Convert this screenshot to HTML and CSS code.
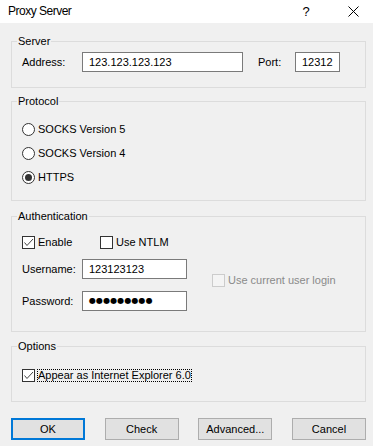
FILE: index.html
```html
<!DOCTYPE html>
<html lang="en">
<head>
    <meta charset="UTF-8">
    <title>Proxy Server</title>
    <link rel="stylesheet" href="styles.css">
</head>
<body>
    <div class="titlebar">
        <span class="title">Proxy Server</span>
        <span class="help">?</span>
        <svg class="close" width="11" height="11" viewBox="0 0 11 11">
            <path d="M0.5 0.5 L10.5 10.5 M10.5 0.5 L0.5 10.5" stroke="#000" stroke-width="1" fill="none"/>
        </svg>
    </div>

    <div class="dialog">
        <fieldset class="group group-server">
            <legend>Server</legend>
            <div class="row">
                <label class="lbl lbl-addr">Address:</label>
                <div class="field field-addr">123.123.123.123</div>
                <label class="lbl lbl-port">Port:</label>
                <div class="field field-port">12312</div>
            </div>
        </fieldset>

        <fieldset class="group group-protocol">
            <legend>Protocol</legend>
            <div class="option radio-row">
                <span class="radio"></span>
                <span>SOCKS Version 5</span>
            </div>
            <div class="option radio-row">
                <span class="radio"></span>
                <span>SOCKS Version 4</span>
            </div>
            <div class="option radio-row">
                <span class="radio checked"></span>
                <span>HTTPS</span>
            </div>
        </fieldset>

        <fieldset class="group group-auth">
            <legend>Authentication</legend>
            <div class="check-row">
                <div class="option opt-enable">
                    <span class="checkbox">
                        <svg width="11" height="11" viewBox="0 0 11 11"><polyline points="1.5,5.5 4,8.5 10,2" fill="none" stroke="#444" stroke-width="1"/></svg>
                    </span>
                    <span>Enable</span>
                </div>
                <div class="option">
                    <span class="checkbox"></span>
                    <span>Use NTLM</span>
                </div>
            </div>
            <div class="auth-body">
                <div class="auth-fields">
                    <div class="row row-user">
                        <label class="lbl lbl-addr">Username:</label>
                        <div class="field field-user">123123123</div>
                    </div>
                    <div class="row row-pass">
                        <label class="lbl lbl-addr">Password:</label>
                        <div class="field field-user field-pass">●●●●●●●●●</div>
                    </div>
                </div>
                <div class="option disabled">
                    <span class="checkbox"></span>
                    <span>Use current user login</span>
                </div>
            </div>
        </fieldset>

        <fieldset class="group group-options">
            <legend>Options</legend>
            <div class="option">
                <span class="checkbox">
                    <svg width="11" height="11" viewBox="0 0 11 11"><polyline points="1.5,5.5 4,8.5 10,2" fill="none" stroke="#444" stroke-width="1"/></svg>
                </span>
                <span class="focused">Appear as Internet Explorer 6.0</span>
            </div>
        </fieldset>

        <div class="buttons">
            <button class="btn btn-default">OK</button>
            <button class="btn">Check</button>
            <button class="btn">Advanced...</button>
            <button class="btn">Cancel</button>
        </div>
    </div>
</body>
</html>
```

FILE: styles.css
```css
body {
    margin: 0;
    background-color: #f0f0f0;
    font-family: "Liberation Sans", Arial, sans-serif;
    font-size: 11px;
    color: #000;
}
.titlebar {
    height: 23px;
    background: #fff;
    display: flex;
    align-items: center;
}
.title {
    flex: 1;
    padding-left: 8px;
    padding-bottom: 1px;
    font-size: 12px;
    letter-spacing: -0.5px;
}
.help {
    width: 10px;
    text-align: center;
    font-size: 13px;
}
.close {
    margin-left: 37px;
    margin-right: 14px;
}
.dialog {
    padding: 12px 7px 0 11px;
}
.group {
    margin: 0;
    min-width: 0;
    border: 1px solid #dcdcdc;
    padding: 0 10px;
}
.group legend {
    margin-left: -5px;
    padding: 0 1px;
    line-height: 13px;
}
.group-server {
    padding-top: 4px;
    padding-bottom: 15px;
}
.group-protocol {
    margin-top: 7px;
    padding-top: 9px;
    padding-bottom: 11px;
}
.group-auth {
    margin-top: 9px;
    padding-top: 13px;
    padding-bottom: 20px;
}
.group-options {
    margin-top: 8px;
    padding-top: 16px;
    padding-bottom: 19px;
}
.row {
    display: flex;
    align-items: center;
    height: 20px;
}
.lbl-addr {
    width: 60px;
}
.lbl-port {
    width: 37px;
    margin-left: 15px;
}
.field {
    box-sizing: border-box;
    height: 20px;
    line-height: 18px;
    border: 1px solid #7a7a7a;
    background: #fff;
    padding-left: 6px;
    white-space: nowrap;
}
.field-addr {
    width: 161px;
}
.field-port {
    width: 45px;
}
.field-user {
    width: 105px;
}
.field-pass {
    font-family: "DejaVu Sans", sans-serif;
    font-size: 8px;
    letter-spacing: 0.1px;
}
.option {
    display: flex;
    align-items: center;
    gap: 3px;
    line-height: 13px;
}
.radio-row {
    height: 24px;
}
.radio {
    box-sizing: border-box;
    width: 13px;
    height: 13px;
    border: 1px solid #333;
    border-radius: 50%;
    background: #fff;
    position: relative;
}
.radio.checked::after {
    content: "";
    position: absolute;
    left: 2px;
    top: 2px;
    width: 7px;
    height: 7px;
    border-radius: 50%;
    background: #333;
}
.checkbox {
    box-sizing: border-box;
    width: 13px;
    height: 13px;
    border: 1px solid #333;
    background: #fff;
    display: flex;
}
.check-row {
    display: flex;
    height: 13px;
    align-items: center;
}
.opt-enable {
    width: 78px;
}
.auth-body {
    display: flex;
    align-items: center;
}
.row-user {
    margin-top: 10px;
}
.row-pass {
    margin-top: 12px;
}
.auth-fields {
    width: 165px;
    margin-right: 25px;
}
.disabled {
    color: #8a8a8a;
}
.disabled .checkbox {
    border-color: #cccccc;
    background: #f4f4f4;
}
.focused {
    margin-left: -1px;
    padding: 0 1px;
    outline: 1px dotted #000;
    outline-offset: -1px;
}
.buttons {
    display: flex;
    justify-content: space-between;
    margin-top: 16px;
}
.btn {
    box-sizing: border-box;
    width: 74px;
    height: 22px;
    border: 1px solid #adadad;
    background: #e1e1e1;
    font-family: "Liberation Sans", Arial, sans-serif;
    font-size: 11px;
    color: #000;
    padding: 0;
}
.btn-default {
    border: 2px solid #0078d7;
}
```
